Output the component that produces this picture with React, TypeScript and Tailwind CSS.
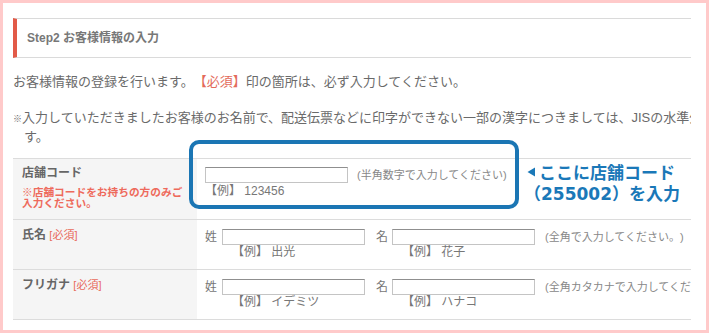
import React from "react";

const FONT = { fontFamily: '"Liberation Sans", "Noto Sans CJK JP", sans-serif' };
const CJK = { fontFamily: '"Noto Sans CJK JP", "Liberation Sans", sans-serif' };
const DIG = { fontFamily: '"DejaVu Sans", "Liberation Sans", sans-serif' };

function Field({ w = "w-[143px]" }: { w?: string }) {
  return (
    <div
      className={`${w} h-[16px] border border-[#c4c4c4] border-t-[#8f8f8f] bg-white shrink-0`}
    />
  );
}

export default function App() {
  return (
    <div
      className="w-[709px] h-[333px] bg-[#ffcaca] p-[3px] [text-spacing-trim:space-all]"
      style={FONT}
    >
      <div className="relative w-full h-full bg-white overflow-hidden">
        <div className="ml-[10px] w-[678px] overflow-hidden pt-[15px] text-[#666]">
          {/* heading */}
          <div className="h-[40px] border-y border-[#dadada] border-l-4 border-l-[#e25a48] flex items-center pl-[10px]">
            <span className="text-[12px] font-bold text-[#777] leading-none">
              Step2 お客様情報の入力
            </span>
          </div>

          <p className="mt-[15px] text-[13px] leading-[18px] whitespace-nowrap text-[#6a6a6a]">
            お客様情報の登録を行います。<span className="text-[#e36a5a]">【必須】</span>
            印の箇所は、必ず入力してください。
          </p>

          <div className="mt-[18px] text-[13px] leading-[18px] whitespace-nowrap text-[#6a6a6a]">
            <div>
              <span className="text-[9px]">※</span>
              入力していただきましたお客様のお名前で、配送伝票などに印字ができない一部の漢字につきましては、JISの水準外の文字となりま
            </div>
            <div className="pl-[11px]">す。</div>
          </div>

          {/* table */}
          <div className="mt-[12px] border-t border-[#dcdcdc]">
            {/* row 1 */}
            <div className="flex h-[61px] border-b border-[#dcdcdc]">
              <div className="w-[184px] shrink-0 bg-[#f5f5f5] pl-[9px] pt-[6px]">
                <div className="text-[12px] font-bold leading-[16px] text-[#666]">店舗コード</div>
                <div className="mt-[6px] text-[10.7px] font-bold leading-[10.5px] text-[#ee6a5c]">
                  ※店舗コードをお持ちの方のみご
                  <br />
                  入力ください。
                </div>
              </div>
              <div className="pl-[8px] pt-[8px]">
                <div className="flex items-center">
                  <Field />
                  <span className="ml-[9px] text-[11px] text-[#888] whitespace-nowrap leading-[16px]">
                    (半角数字で入力してください)
                  </span>
                </div>
                <div className="mt-[1px] text-[12px] leading-[14px] text-[#777] whitespace-nowrap">
                  【例】 123456
                </div>
              </div>
            </div>

            {/* row 2 */}
            <div className="flex h-[50px] border-b border-[#dcdcdc]">
              <div className="w-[184px] shrink-0 bg-[#f5f5f5] pl-[9px] pt-[7px]">
                <div className="text-[12px] font-bold leading-[16px] text-[#666] whitespace-nowrap">
                  氏名 <span className="text-[11px] font-normal text-[#e86a5c]">[必須]</span>
                </div>
              </div>
              <div className="pl-[8px] pt-[9px] flex items-start whitespace-nowrap">
                <span className="text-[12px] leading-[16px] text-[#777]">姓</span>
                <div className="ml-[5px]">
                  <Field />
                  <div className="pl-[10px] text-[12px] leading-[14px] text-[#777]">【例】 出光</div>
                </div>
                <span className="ml-[11px] text-[12px] leading-[16px] text-[#777]">名</span>
                <div className="ml-[4px]">
                  <Field />
                  <div className="pl-[10px] text-[12px] leading-[14px] text-[#777]">【例】 花子</div>
                </div>
                <span className="ml-[10px] text-[11px] leading-[16px] text-[#888]">
                  (全角で入力してください。)
                </span>
              </div>
            </div>

            {/* row 3 */}
            <div className="flex h-[50px] border-b border-[#dcdcdc]">
              <div className="w-[184px] shrink-0 bg-[#f5f5f5] pl-[9px] pt-[7px]">
                <div className="text-[12px] font-bold leading-[16px] text-[#666] whitespace-nowrap">
                  フリガナ <span className="text-[11px] font-normal text-[#e86a5c]">[必須]</span>
                </div>
              </div>
              <div className="pl-[8px] pt-[9px] flex items-start whitespace-nowrap">
                <span className="text-[12px] leading-[16px] text-[#777]">姓</span>
                <div className="ml-[5px]">
                  <Field />
                  <div className="pl-[10px] text-[12px] leading-[14px] text-[#777]">【例】 イデミツ</div>
                </div>
                <span className="ml-[11px] text-[12px] leading-[16px] text-[#777]">名</span>
                <div className="ml-[4px]">
                  <Field />
                  <div className="pl-[10px] text-[12px] leading-[14px] text-[#777]">【例】 ハナコ</div>
                </div>
                <span className="ml-[10px] text-[11px] leading-[16px] text-[#888]">
                  (全角カタカナで入力してください。)
                </span>
              </div>
            </div>
          </div>
        </div>

        {/* annotation overlay */}
        <div className="absolute left-[186px] top-[137px] w-[330px] h-[69px] border-4 border-[#1b76b4] rounded-[10px]" />
        <div
          className="absolute left-[522px] top-[158px] text-[17px] font-bold leading-[21px] text-[#1a78b8] whitespace-nowrap"
          style={CJK}
        >
          <div className="flex items-center">
            <svg width="9" height="10" viewBox="0 0 9 10" className="mr-[3px] ml-[2px]">
              <polygon points="8,0.5 8,9.5 0.5,5" fill="#1a78b8" />
            </svg>
            ここに店舗コード
          </div>
          <div className="-ml-[1px]">
            （<span style={DIG}>255002</span>）を入力
          </div>
        </div>
      </div>
    </div>
  );
}
